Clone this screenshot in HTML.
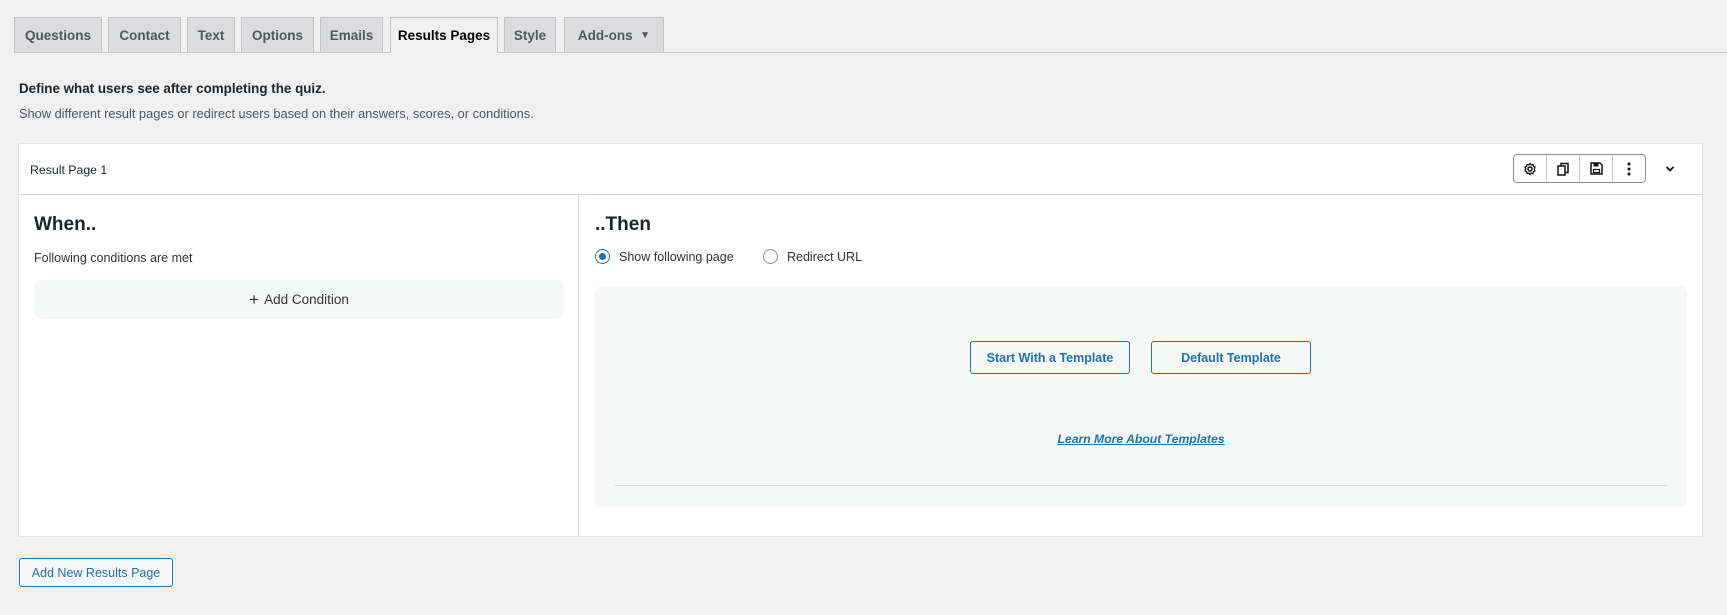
<!DOCTYPE html>
<html><head><meta charset="utf-8"><style>
*{box-sizing:border-box}
body{margin:0;width:1727px;height:615px;background:#f0f0f1;font-family:"Liberation Sans",sans-serif;color:#1d2327;position:relative;overflow:hidden}
.abs{position:absolute}
.tab{position:absolute;top:17px;height:35px;background:#dcdcde;border:1px solid #c3c4c7;border-bottom:none;font-size:13.5px;font-weight:bold;color:#50575e;display:flex;align-items:center;justify-content:center}
.tab.on{background:#f0f0f1;color:#000;height:36px}
.line{position:absolute;left:14px;right:0;top:52px;height:1px;background:#c3c4c7}
.card{position:absolute;left:19px;top:144px;width:1683px;height:392px;background:#fff;box-shadow:0 0 0 1px #e4e4e4}
.btn{position:absolute;border:1px solid #2271b1;color:#2271b1;border-radius:3px;font-size:13px;display:flex;align-items:center;justify-content:center;background:#f6f7f7}
.radio{position:absolute;width:15px;height:15px;border:1px solid #8c8f94;border-radius:50%;background:#fff}
</style></head><body>
<div class="line"></div>
<div class="tab" style="left:14px;width:88px">Questions</div>
<div class="tab" style="left:108px;width:73px">Contact</div>
<div class="tab" style="left:187px;width:48px">Text</div>
<div class="tab" style="left:241px;width:73px">Options</div>
<div class="tab" style="left:320px;width:63px">Emails</div>
<div class="tab on" style="left:390px;width:108px">Results Pages</div>
<div class="tab" style="left:504px;width:52px">Style</div>
<div class="tab" style="left:564px;width:100px">Add-ons&nbsp;&nbsp;<span style="font-size:10px">▼</span></div>

<div class="abs" style="left:19px;top:81px;font-size:13.4px;font-weight:bold">Define what users see after completing the quiz.</div>
<div class="abs" style="left:19px;top:106px;font-size:12.8px;color:#50575e">Show different result pages or redirect users based on their answers, scores, or conditions.</div>

<div class="card">
 <div class="abs" style="left:11px;top:19px;font-size:12.3px">Result Page 1</div>
 <div class="abs" style="left:1494px;top:10px;width:133px;height:29px;border:1px solid #8c8f94;border-radius:4px;display:flex">
  <div style="flex:1;border-right:1px solid #ccc;display:flex;align-items:center;justify-content:center"><svg width="14" height="14" viewBox="0 0 14 14"><circle cx="7" cy="7" r="2" fill="none" stroke="#111" stroke-width="1.5"/><path d="M7 1.5l1.2 1.4 1.8-.4.4 1.8 1.6.9-.7 1.8.7 1.8-1.6.9-.4 1.8-1.8-.4L7 12.5 5.8 11.1l-1.8.4-.4-1.8-1.6-.9.7-1.8-.7-1.8 1.6-.9.4-1.8 1.8.4z" fill="none" stroke="#111" stroke-width="1.3"/></svg></div>
  <div style="flex:1;border-right:1px solid #ccc;display:flex;align-items:center;justify-content:center"><svg width="14" height="14" viewBox="0 0 14 14"><rect x="2" y="4" width="7" height="9" fill="none" stroke="#111" stroke-width="1.5"/><path d="M5 4V1.5h7v9H9" fill="none" stroke="#111" stroke-width="1.5"/></svg></div>
  <div style="flex:1;border-right:1px solid #ccc;display:flex;align-items:center;justify-content:center"><svg width="13" height="13" viewBox="0 0 13 13"><path d="M1 1h9l2 2v9H1z" fill="none" stroke="#111" stroke-width="1.5"/><rect x="3.5" y="1" width="5" height="3.5" fill="#111"/><rect x="3.5" y="7.5" width="6" height="3" fill="none" stroke="#111" stroke-width="1.2"/></svg></div>
  <div style="flex:1;display:flex;align-items:center;justify-content:center"><svg width="4" height="14"><circle cx="2" cy="2" r="1.5" fill="#111"/><circle cx="2" cy="7" r="1.5" fill="#111"/><circle cx="2" cy="12" r="1.5" fill="#111"/></svg></div>
 </div>
 <svg class="abs" style="left:1646px;top:21px" width="10" height="8" viewBox="0 0 10 8"><path d="M1.5 2l3.5 3.5L8.5 2" fill="none" stroke="#111" stroke-width="1.8"/></svg>
 <div class="abs" style="left:0;right:0;top:50px;height:1px;background:#e3d8dd"></div>
 <div class="abs" style="left:559px;top:50px;bottom:0;width:1px;background:#e3d8dd"></div>
 <div class="abs" style="left:15px;top:70px;font-size:19px;font-weight:bold">When..</div>
 <div class="abs" style="left:15px;top:107px;font-size:12.5px;color:#333">Following conditions are met</div>
 <div class="abs" style="left:15px;top:136px;width:530px;height:39px;background:#f6f7f7;border-radius:8px;display:flex;align-items:center;justify-content:center;font-size:13.5px;color:#333"><span style="font-size:17px;margin-right:5px">+</span>Add Condition</div>
 <div class="abs" style="left:576px;top:70px;font-size:19px;font-weight:bold">..Then</div>
 <div class="radio" style="left:576px;top:105px;border-color:#2271b1"><div style="position:absolute;left:3px;top:3px;width:7px;height:7px;border-radius:50%;background:#2271b1"></div></div>
 <div class="abs" style="left:600px;top:106px;font-size:12.5px;color:#333">Show following page</div>
 <div class="radio" style="left:744px;top:105px"></div>
 <div class="abs" style="left:768px;top:106px;font-size:12.5px;color:#333">Redirect URL</div>
 <div class="abs" style="left:576px;top:142px;width:1092px;height:221px;background:#f6f7f7;border-radius:8px">
  <div class="btn" style="left:375px;top:55px;width:160px;height:33px;font-weight:bold;font-size:12.5px">Start With a Template</div>
  <div class="btn" style="left:556px;top:55px;width:160px;height:33px;font-weight:bold;font-size:12.5px">Default Template</div>
  <div class="abs" style="left:0;width:1092px;top:146px;text-align:center;font-size:12.2px;font-style:italic;font-weight:bold;color:#2271b1;text-decoration:underline">Learn More About Templates</div>
  <div class="abs" style="left:20px;right:20px;top:199px;height:1px;background:#dcdcde"></div>
 </div>
</div>
<div class="btn" style="left:19px;top:558px;width:154px;height:29px;font-size:12.5px">Add New Results Page</div>
</body></html>
